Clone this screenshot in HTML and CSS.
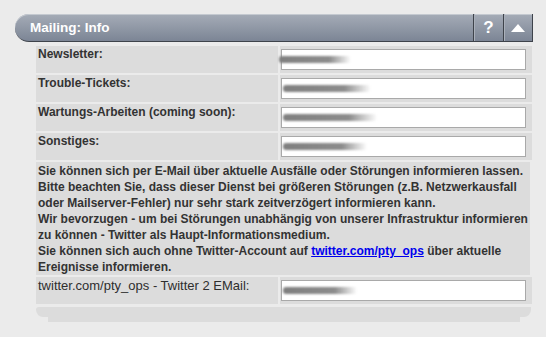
FILE: index.html
```html
<!DOCTYPE html>
<html lang="de">
<head>
<meta charset="utf-8">
<title>Mailing: Info</title>
<link rel="stylesheet" href="styles.css">
</head>
<body>
<div class="panel">
  <div class="head">
    <div class="title">Mailing: Info</div>
    <div class="btn help">?</div>
    <div class="btn up"><svg width="14" height="8" viewBox="0 0 14 8"><polygon points="0,8 7,0 14,8" fill="#fff"/></svg></div>
  </div>
  <div class="grid">
    <div class="label">Newsletter:</div>
    <div class="cell"><div class="field"><span class="blur w1"></span></div></div>
    <div class="label">Trouble-Tickets:</div>
    <div class="cell"><div class="field"><span class="blur w2"></span></div></div>
    <div class="label">Wartungs-Arbeiten (coming soon):</div>
    <div class="cell"><div class="field"><span class="blur w3"></span></div></div>
    <div class="label">Sonstiges:</div>
    <div class="cell"><div class="field"><span class="blur w4"></span></div></div>
    <div class="info">Sie können sich per E-Mail über aktuelle Ausfälle oder Störungen informieren lassen.<br>Bitte beachten Sie, dass dieser Dienst bei größeren Störungen (z.B. Netzwerkausfall oder Mailserver-Fehler) nur sehr stark zeitverzögert informieren kann.<br>Wir bevorzugen - um bei Störungen unabhängig von unserer Infrastruktur informieren zu können - Twitter als Haupt-Informationsmedium.<br>Sie können sich auch ohne Twitter-Account auf <a href="#">twitter.com/pty_ops</a> über aktuelle<br>Ereignisse informieren.</div>
    <div class="label plain">twitter.com/pty_ops - Twitter 2 EMail:</div>
    <div class="cell"><div class="field"><span class="blur w5"></span></div></div>
  </div>
  <div class="foot"></div>
  <div class="foot2"></div>
</div>
</body>
</html>
```

FILE: styles.css
```css
html, body {
  margin: 0;
  padding: 0;
  background: #ebebeb;
}
body {
  font-family: "Liberation Sans", Arial, sans-serif;
  color: #333;
}
.panel {
  padding: 14px 0 0 15px;
  width: 518px;
}
.head {
  display: flex;
  height: 27px;
  border-bottom: 1px solid #3e434b;
  border-radius: 14px 0 0 14px;
  background: linear-gradient(#a5acb7, #7c8595);
  box-shadow: inset 0 1px 0 #c4c9d0;
}
.title {
  flex: 1;
  display: flex;
  align-items: center;
  padding-left: 15px;
  color: #fff;
  font-weight: bold;
  font-size: 13.5px;
  border-right: 1px solid #3e434b;
}
.btn {
  width: 29px;
  display: flex;
  align-items: center;
  justify-content: center;
  color: #fff;
  font-weight: bold;
  font-size: 17px;
  box-shadow: inset 1px 0 0 #aab0ba;
}
.help {
  border-right: 1px solid #3e434b;
}
.up {
  width: 28px;
  border-right: 1px solid #3e434b;
}
.grid {
  margin: 4px 0 0 21px;
  width: 496px;
  display: grid;
  grid-template-columns: 242px 252px;
  gap: 2px;
}
.label, .cell, .info {
  background: #dcdcdc;
}
.label {
  height: 25px;
  padding: 1px 2px;
  font-size: 12px;
  line-height: 15px;
  font-weight: bold;
}
.label.plain {
  font-weight: normal;
  font-size: 13px;
  color: #2e2e2e;
}
.cell {
  height: 27px;
  padding: 3px 0 0 1px;
  box-sizing: border-box;
}
.field {
  width: 245px;
  height: 21px;
  box-sizing: border-box;
  border: 1px solid #a9a9a9;
  background: #fff;
  display: flex;
  align-items: center;
}
.blur {
  display: block;
  height: 7px;
  margin-left: 1px;
  border-radius: 3px;
  background: linear-gradient(90deg, #7f7f7f, #8c8c8c 70%, rgba(150,150,150,0));
  filter: blur(0.8px);
}
.w1 { width: 72px; margin-left: -3px; }
.w2 { width: 88px; }
.w3 { width: 94px; }
.w4 { width: 84px; }
.w5 { width: 74px; }
.info {
  grid-column: 1 / 3;
  box-sizing: border-box;
  height: 113px;
  padding: 1px 2px 0;
  width: 494px;
  font-size: 12px;
  line-height: 16px;
  font-weight: bold;
}
.info a {
  color: #0000ee;
  text-decoration: underline;
}
.foot {
  margin: 3px 0 0 21px;
  width: 495px;
  height: 10px;
  background: #dcdcdc;
  border-radius: 4px 0 10px 10px;
}
.foot2 {
  margin: 0 0 0 33px;
  width: 472px;
  height: 5px;
  background: #dcdcdc;
}
```
